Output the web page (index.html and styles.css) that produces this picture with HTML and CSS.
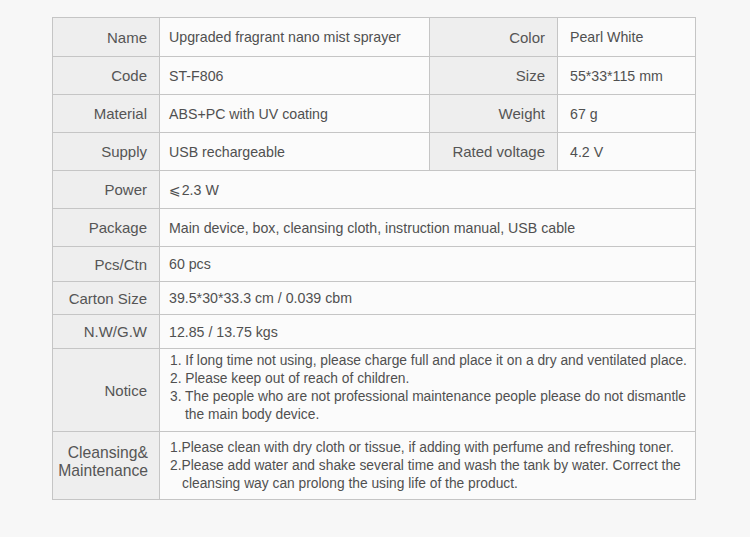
FILE: index.html
```html
<!DOCTYPE html>
<html lang="en">
<head>
<meta charset="utf-8">
<title>Specifications</title>
<link rel="stylesheet" href="styles.css">
</head>
<body>
<table class="spec">
  <colgroup>
    <col class="c1"><col class="c2"><col class="c3"><col class="c4">
  </colgroup>
  <tr class="h39">
    <th>Name</th><td>Upgraded fragrant nano mist sprayer</td>
    <th>Color</th><td class="v2">Pearl White</td>
  </tr>
  <tr class="h38">
    <th>Code</th><td>ST-F806</td>
    <th>Size</th><td class="v2">55*33*115 mm</td>
  </tr>
  <tr class="h38">
    <th>Material</th><td>ABS+PC with UV coating</td>
    <th>Weight</th><td class="v2">67 g</td>
  </tr>
  <tr class="h38">
    <th>Supply</th><td>USB rechargeable</td>
    <th>Rated voltage</th><td class="v2">4.2 V</td>
  </tr>
  <tr class="h38">
    <th>Power</th><td colspan="3"><span class="le">⩽</span>2.3 W</td>
  </tr>
  <tr class="h38">
    <th>Package</th><td colspan="3">Main device, box, cleansing cloth, instruction manual, USB cable</td>
  </tr>
  <tr class="h35">
    <th>Pcs/Ctn</th><td colspan="3">60 pcs</td>
  </tr>
  <tr class="h33">
    <th>Carton Size</th><td colspan="3">39.5*30*33.3 cm / 0.039 cbm</td>
  </tr>
  <tr class="h34">
    <th>N.W/G.W</th><td colspan="3">12.85 / 13.75 kgs</td>
  </tr>
  <tr class="h83">
    <th>Notice</th>
    <td colspan="3" class="list notice-cell">
      <div class="item notice"><span class="num">1.</span> If long time not using, please charge full and place it on a dry and ventilated place.</div>
      <div class="item notice"><span class="num">2.</span> Please keep out of reach of children.</div>
      <div class="item notice"><span class="num">3.</span> The people who are not professional maintenance people please do not dismantle the main body device.</div>
    </td>
  </tr>
  <tr class="h68">
    <th class="multi">Cleansing&amp;<br>Maintenance</th>
    <td colspan="3" class="list">
      <div class="item clean"><span class="num">1.</span>Please clean with dry cloth or tissue, if adding with perfume and refreshing toner.</div>
      <div class="item clean"><span class="num">2.</span>Please add water and shake several time and wash the tank by water. Correct the cleansing way can prolong the using life of the product.</div>
    </td>
  </tr>
</table>
</body>
</html>
```
FILE: styles.css
```css
html, body {
  margin: 0;
  padding: 0;
  background: #f7f7f7;
}
body {
  padding: 17px 0 0 52px;
  font-family: "Liberation Sans", Arial, sans-serif;
  color: #555;
}
.spec {
  border-collapse: collapse;
  table-layout: fixed;
  width: 644px;
}
.c1 { width: 107px; }
.c2 { width: 270px; }
.c3 { width: 128px; }
.c4 { width: 138px; }
.spec th, .spec td {
  border: 1px solid #c5c5c5;
  padding: 0;
  vertical-align: middle;
}
.spec th {
  background: #eeeeee;
  font-weight: normal;
  font-size: 15px;
  text-align: right;
  padding-right: 12px;
  color: #555;
}
.spec td {
  background: #fbfbfb;
  text-align: left;
  padding-left: 9px;
  font-size: 14.2px;
  color: #505050;
}
.spec td.v2 { padding-left: 12px; }
.le { font-family: "DejaVu Sans", sans-serif; font-size: 14px; margin-right: 1px; }
.h39 { height: 39px; }
.h38 { height: 38px; }
.h35 { height: 35px; }
.h34 { height: 34px; }
.h33 { height: 33px; }
.h83 { height: 83px; }
.h68 { height: 68px; }
.spec th.multi {
  font-size: 15.7px;
  line-height: 18px;
  padding-right: 11px;
  padding-bottom: 8px;
}
.spec td.list {
  font-size: 13.8px;
  line-height: 18px;
  padding-left: 10px;
}
.spec td.notice-cell { padding-bottom: 4px; }
.item { padding-left: 15px; text-indent: -15px; }
.item .num { display: inline-block; text-indent: 0; }
.item.clean { padding-left: 12px; text-indent: -12px; }
```
